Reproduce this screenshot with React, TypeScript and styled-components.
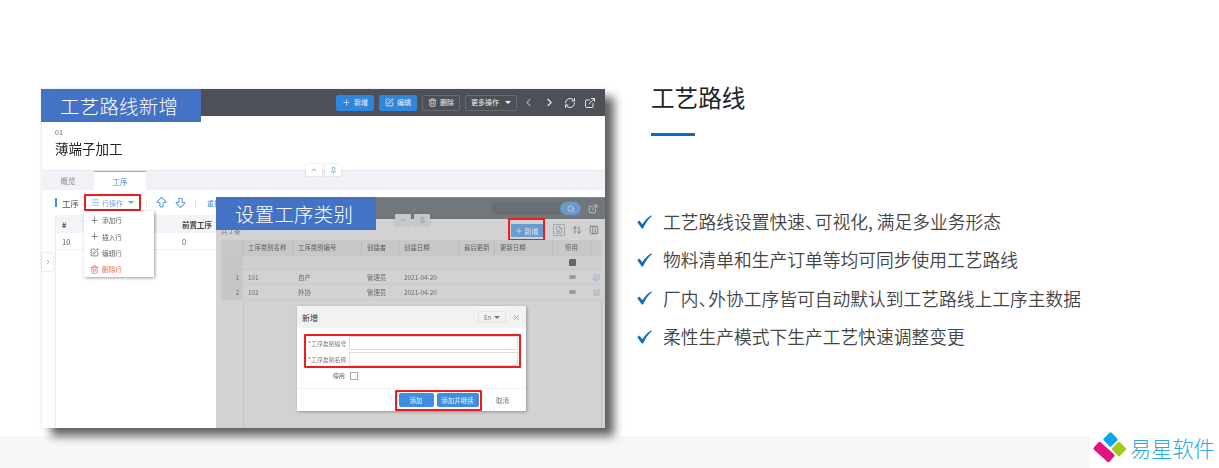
import React from "react";
import styled, { createGlobalStyle } from "styled-components";
import { Plus, SquarePen, Trash2, ChevronLeft, ChevronRight, ChevronUp, ChevronDown, RefreshCw, ExternalLink, Menu, ArrowBigUp, ArrowBigDown, Pin, Search, X, Columns3, ArrowUpDown, FileSymlink } from "lucide-react";

const Global = createGlobalStyle`
  html, body { margin: 0; padding: 0; background: #fff; overflow: hidden; }
  * { box-sizing: border-box; }
  body { font-family: "Noto Sans CJK SC", "Noto Sans", sans-serif; }
`;
const Page = styled.div`width: 1219px; height: 468px; display: flex; flex-direction: column; background: #fff;`;
const Main = styled.div`height: 436px; display: flex; align-items: flex-start;`;
const Band = styled.div`height: 32px; background: #f7f7f7; display: flex; justify-content: flex-end;`;
const Logo = styled.div`width: 129px; margin-top: -1px; height: 33px; background: #fff; display: flex; align-items: flex-start;`;
const LogoText = styled.span`font-size: 21.2px; line-height: 26px; color: #2aa7e2; font-weight: 300; white-space: nowrap;`;
const LogoSvg = styled.svg`overflow: visible; flex: none;`;

const Shot = styled.div`
  position: relative; width: 563px; height: 339px; margin: 89px 0 0 42px; background: #fff;
  box-shadow: 9px 8px 9px rgba(0,0,0,.62), -1px 0 3px rgba(0,0,0,.08);
  display: flex; flex-direction: column; filter: blur(.35px);
`;
const HeaderBar = styled.div`height: 27px; background: #4b5157; display: flex; align-items: center; justify-content: flex-end; gap: 5px; padding-right: 9px; color: #f0f2f4; flex: none;`;
const HeadBtn = styled.div<{ $solid?: boolean; $w: number }>`
  width: ${p => p.$w}px; height: 16px; border-radius: 2px; display: flex; align-items: center; justify-content: center; gap: 3px;
  font-size: 7px; line-height: 1; color: #eef1f4;
  background: ${p => p.$solid ? "#2f86dd" : "transparent"};
  border: 1px solid ${p => p.$solid ? "#2f86dd" : "#666c72"};
`;
const HeadIcons = styled.div`display: flex; align-items: center; gap: 8px; margin-left: 0; color: #e8eaec;`;
const Label = styled.div<{ $l: number; $t: number; $w: number; $h: number }>`
  position: absolute; z-index: 5; left: ${p => p.$l}px; top: ${p => p.$t}px; width: ${p => p.$w}px; height: ${p => p.$h}px;
  background: #4472c4; color: #fff; font-size: 19.4px; line-height: ${p => p.$h}px; padding-left: 19px; letter-spacing: .3px; font-weight: 300; white-space: nowrap;
`;
const Intro = styled.div`height: 54px; padding: 12px 0 0 13px; flex: none; position: relative;`;
const Code = styled.div`font-size: 7px; line-height: 9px; color: #666;`;
const Name = styled.div`font-size: 13.5px; line-height: 20px; color: #222; margin-top: 1px;`;
const Tabs = styled.div`height: 20px; background: #f0f2f7; border-top: 1px solid #e3e7ee; display: flex; flex: none; font-size: 7.5px; align-items: stretch;`;
const Tab = styled.div<{ $on?: boolean }>`
  width: 52px; text-align: center; line-height: 19px; color: ${p => p.$on ? "#3d8be0" : "#888"};
  background: ${p => p.$on ? "#fff" : "transparent"}; border-top: ${p => p.$on ? "1px solid #7db4ee" : "none"};
`;
const MiniGroup = styled.div<{ $l: number; $t: number }>`position: absolute; left: ${p => p.$l}px; top: ${p => p.$t}px; display: flex; gap: 3px; z-index: 2;`;
const MiniBtn = styled.div<{ $w?: number; $dim?: boolean }>`
  width: ${p => p.$w ?? 16}px; height: 12px; background: ${p => p.$dim ? "#c8c8c8" : "#fff"}; border-radius: 1px;
  box-shadow: 0 0 2px rgba(0,0,0,.2); display: flex; align-items: center; justify-content: center; color: ${p => p.$dim ? "#8a8f96" : "#4d95e2"};
`;
const Toolbar = styled.div`height: 25px; display: flex; align-items: center; padding-left: 13px; flex: none; font-size: 8.5px; color: #555;`;
const Accent = styled.div`width: 2px; height: 9px; background: #3d8be0; margin-right: 5px;`;
const RedBox = styled.div`border: 2px solid #ee1c1c; border-radius: 1px;`;
const RowOps = styled(RedBox)`width: 57px; height: 17px; margin-left: 5px; display: flex; align-items: center; gap: 2px; padding-left: 5px; color: #6ea6e6; font-size: 7px;`;
const Caret = styled.span`width: 0; height: 0; border: 3px solid transparent; border-top-color: currentColor; margin: 3px 0 0 3px;`;
const Sep = styled.div`width: 1px; height: 8px; background: #dfe3e8; margin: 0 5px;`;
const BlueIcon = styled.div`display: flex; color: #5c9de4; margin: 0 3px;`;
const BlueText = styled.span`color: #3d8be0; font-size: 7px; margin-left: 6px;`;
const Grid = styled.div`margin-left: 13px; width: 161px; flex: 1; border-left: 1px solid #e8ebf0; font-size: 7.5px; color: #555;`;
const GridHead = styled.div`height: 18px; background: #f2f4f7; display: grid; grid-template-columns: 120px 1fr; align-items: center; font-weight: 700; color: #444;`;
const GridRow = styled.div`height: 17px; border-bottom: 1px solid #eef0f4; display: grid; grid-template-columns: 120px 1fr; align-items: center;`;
const Cell = styled.span`padding-left: 6px; white-space: nowrap;`;
const Side = styled.div`position: absolute; left: 0; top: 164px; width: 11px; height: 18px; background: #fff; box-shadow: 0 0 2px rgba(0,0,0,.25); border-radius: 0 2px 2px 0; display: flex; align-items: center; justify-content: center; color: #5c9de4; z-index: 3;`;
const Dropdown = styled.div`position: absolute; z-index: 4; left: 42px; top: 122px; width: 70px; height: 66px; background: #fff; box-shadow: 1px 1px 3px rgba(0,0,0,.4); padding-top: 1px;`;
const DropItem = styled.div<{ $danger?: boolean }>`height: 16.4px; display: flex; align-items: center; gap: 3px; padding-left: 5px; font-size: 6.7px; color: ${p => p.$danger ? "#f0654c" : "#666"};`;
const DropIcon = styled.span`width: 10px; display: flex; justify-content: center;`;

const Overlay = styled.div`position: absolute; z-index: 3; left: 174px; top: 108px; width: 389px; height: 231px; background: #d2d2d2; display: flex; flex-direction: column;`;
const OverTop = styled.div`height: 22px; background: #72777c; border-top: 1px solid #8a8e92; display: flex; align-items: center; justify-content: flex-end; gap: 8px; padding-right: 7px; color: #c8ccd0; flex: none;`;
const SearchPill = styled.div`width: 21px; height: 13px; border-radius: 7px; background: #6d98ca; display: flex; align-items: center; justify-content: center; color: #ddd;`;
const SearchBox = styled.div`width: 90px; height: 13px; border-radius: 7px; background: #6a6f74; display: flex; justify-content: flex-end; margin-right: -1px;`;
const OverTools = styled.div`height: 21px; display: flex; align-items: center; justify-content: flex-end; gap: 7px; padding-right: 6px; color: #777; flex: none;`;
const AddOuter = styled(RedBox)`width: 37px; height: 23px; display: flex; align-items: center; justify-content: center; margin-right: 1px;`;
const AddBtn = styled.div`width: 32px; height: 13px; background: #6b9ad0; color: #dfe6ee; font-size: 7px; display: flex; align-items: center; justify-content: center; gap: 2px; margin-top: 2px;`;
const ToolIcon = styled.div`width: 12px; height: 12px; border: 1px solid #a5a5a5; border-radius: 1px; display: flex; align-items: center; justify-content: center; color: #6f93bb;`;
const Plain = styled.div`display: flex; color: #777;`;
const Count = styled.div`position: absolute; left: 5px; top: 31px; font-size: 6.5px; line-height: 7px; color: #777;`;
const colTpl = "22px 50px 69px 37px 60px 36px 58px 38px 11px";
const TableBox = styled.div`margin: 0 3px 0 5px; flex: 1; font-size: 6.4px; color: #6a6a6a; display: flex; flex-direction: column;`;
const THead = styled.div`height: 16px; display: grid; grid-template-columns: ${colTpl}; background: #c8c8c8; align-items: stretch; color: #5c5c5c; flex: none;`;
const TFilter = styled.div`height: 14px; display: grid; grid-template-columns: ${colTpl}; border-bottom: 1px solid #c6c6c6; background: #cfcfcf; align-items: center; flex: none;`;
const TRow = styled.div`height: 15px; display: grid; grid-template-columns: ${colTpl}; align-items: center; border-bottom: 1px solid #cacaca; flex: none;`;
const TFill = styled.div`flex: 1; margin-left: 22px; border-left: 1px solid #c2c2c2; border-right: 1px solid #b9c4d2;`;
const Num = styled.span`background: #c6c6c6; height: 100%; display: flex; align-items: center; justify-content: flex-end; padding-right: 4px; font-size: 6px;`;
const HeadCell = styled.span<{ $c?: boolean }>`padding-left: ${p => p.$c ? 0 : 5}px; text-align: ${p => p.$c ? "center" : "left"}; white-space: nowrap; line-height: 16px; border-right: 1px solid #bcbcbc;`;
const TCell = styled.span`padding-left: 5px; white-space: nowrap; display: block;`;
const Blank = styled.span`background: #c6c6c6; height: 100%;`;
const Toggle = styled.span`display: block; width: 7px; height: 4px; background: #999; border-radius: 2px; margin: 0 auto;`;
const FilterMark = styled.span`display: block; width: 7px; height: 7px; background: #666; border-radius: 1px; margin: 0 auto;`;
const RowEdit = styled.span`display: flex; justify-content: center; color: #7ba3d3;`;

const Dialog = styled.div`position: absolute; z-index: 4; left: 81px; top: 109px; width: 229px; height: 105px; background: #fff; box-shadow: 1px 1px 3px rgba(0,0,0,.3); display: flex; flex-direction: column;`;
const DlgHead = styled.div`height: 22px; background: #f2f2f2; display: flex; align-items: center; padding: 0 5px; font-size: 8px; color: #333; flex: none;`;
const DlgTitle = styled.span`flex: 1;`;
const Lang = styled.div`width: 28px; height: 12px; border: 1px solid #e4e4e4; font-size: 6px; color: #777; display: flex; align-items: center; justify-content: center; margin-right: 6px;`;
const FormBox = styled(RedBox)`margin: 6px 5px 0 7px; height: 34px; display: flex; flex-direction: column; justify-content: center; gap: 2px; padding: 0 1px 0 0;`;
const FormRow = styled.div`display: flex; align-items: center; font-size: 5.9px; color: #777;`;
const Star = styled.span`color: #e33; margin-left: 2px; width: 3px;`;
const FormLabel = styled.span`width: 38px; white-space: nowrap;`;
const Input = styled.div`flex: 1; height: 14px; border: 1px solid #ddd; background: #fff;`;
const CheckRow = styled.div`display: flex; align-items: center; justify-content: flex-end; width: 61px; gap: 5px; font-size: 6.2px; color: #666; margin-top: 3px; height: 9px;`;
const CheckBox = styled.div`width: 8px; height: 8px; border: 1px solid #aaa; flex: none;`;
const DlgFoot = styled.div`margin-top: auto; height: 23px; border-top: 1px solid #f2f2f2; display: flex; align-items: center; font-size: 6.5px; padding-left: 98px;`;
const FootBox = styled(RedBox)`width: 87px; height: 21px; display: flex; align-items: center; justify-content: center; gap: 3px;`;
const Primary = styled.div<{ $w: number }>`width: ${p => p.$w}px; height: 14px; background: #3f8de0; border-radius: 2px; color: #e6f0fb; display: flex; align-items: center; justify-content: center; white-space: nowrap;`;
const Cancel = styled.span`color: #777; margin-left: 14px;`;

const Right = styled.div`margin: 87px 0 0 32px; width: 500px;`;
const Title = styled.h1`margin: 0 0 0 14px; font-weight: 400; font-size: 23.6px; line-height: 20px; color: #222;`;
const Rule = styled.div`width: 44px; height: 3px; background: #0f6cbd; margin: 26px 0 0 14px;`;
const List = styled.ul`list-style: none; padding: 0; margin: 72px 0 0; display: flex; flex-direction: column; gap: 12.4px;`;
const Item = styled.li`display: flex; align-items: center; gap: 10px; font-size: 17.76px; line-height: 26px; color: #444; white-space: nowrap; font-weight: 350;`;
const Text = styled.span``;
const Punct = styled.span`letter-spacing: -8px;`;

const Check = () => (
  <svg width="16" height="17" viewBox="1 0 16 17"><path d="M1.3 9.2 L3.3 7.6 L6.4 11.2 C8.6 7.6 11.4 4.4 15.6 2.2 L16 3 C12.3 6 9.6 10 7 15.6 L5.8 15.6 Z" fill="#0f6cbd" /></svg>
);
const LogoMark = () => (
  <LogoSvg width="40" height="33" viewBox="0 0 40 33">
    <rect x="-5.5" y="-5.5" width="11" height="11" rx="1.5" transform="translate(20.5 4.5) rotate(45)" fill="#0ea4ea" />
    <rect x="-5.5" y="-5.5" width="11" height="11" rx="1.5" transform="translate(29 14) rotate(45)" fill="#a4c91a" />
    <rect x="-10.5" y="-5" width="21" height="10" rx="1.5" transform="translate(14 17) rotate(42)" fill="#e2127f" />
  </LogoSvg>
);

const features = [
  <>工艺路线设置快速<Punct>、</Punct>可视化, 满足多业务形态</>,
  <>物料清单和生产订单等均可同步使用工艺路线</>,
  <>厂内<Punct>、</Punct>外协工序皆可自动默认到工艺路线上工序主数据</>,
  <>柔性生产模式下生产工艺快速调整变更</>,
];
const cols = ["工序类别名称", "工序类别编号", "创建者", "创建日期", "最后更新", "更新日期"];
const rows = [["1", "101", "自产"], ["2", "102", "外协"]];

export default function App() {
  return (
    <Page>
      <Global />
      <Main>
        <Shot>
          <Label $l={-1} $t={0} $w={160} $h={33}>工艺路线新增</Label>
          <HeaderBar>
            <HeadBtn $solid $w={38}><Plus size={9} />新增</HeadBtn>
            <HeadBtn $solid $w={38}><SquarePen size={9} />编辑</HeadBtn>
            <HeadBtn $w={38}><Trash2 size={9} />删除</HeadBtn>
            <HeadBtn $w={52}>更多操作 <Caret /></HeadBtn>
            <HeadIcons>
              <ChevronLeft size={13} color="#9aa0a6" /><ChevronRight size={13} /><RefreshCw size={12} /><ExternalLink size={12} />
            </HeadIcons>
          </HeaderBar>
          <Intro>
            <Code>01</Code>
            <Name>薄端子加工</Name>
            <MiniGroup $l={264} $t={48}>
              <MiniBtn><ChevronUp size={8} /></MiniBtn>
              <MiniBtn><Pin size={7} /></MiniBtn>
            </MiniGroup>
          </Intro>
          <Tabs><Tab>概览</Tab><Tab $on>工序</Tab></Tabs>
          <Toolbar>
            <Accent />工序
            <RowOps><Menu size={9} />行操作<Caret /></RowOps>
            <Sep />
            <BlueIcon><ArrowBigUp size={13} /></BlueIcon>
            <BlueIcon><ArrowBigDown size={13} /></BlueIcon>
            <Sep /><BlueText>重排</BlueText>
          </Toolbar>
          <Grid>
            <GridHead><Cell>#</Cell><Cell>前置工序</Cell></GridHead>
            <GridRow><Cell>10</Cell><Cell>0</Cell></GridRow>
          </Grid>
          <Side><ChevronRight size={8} /></Side>
          <Dropdown>
            <DropItem><DropIcon><Plus size={9} /></DropIcon>添加行</DropItem>
            <DropItem><DropIcon><Plus size={9} /></DropIcon>插入行</DropItem>
            <DropItem><DropIcon><SquarePen size={9} /></DropIcon>编辑行</DropItem>
            <DropItem $danger><DropIcon><Trash2 size={9} /></DropIcon>删除行</DropItem>
          </Dropdown>
          <Overlay>
            <Label $l={0} $t={0} $w={160} $h={33}>设置工序类别</Label>
            <OverTop>
              <SearchBox><SearchPill><Search size={8} /></SearchPill></SearchBox>
              <ExternalLink size={10} />
            </OverTop>
            <MiniGroup $l={179} $t={17}>
              <MiniBtn $dim><ChevronDown size={8} /></MiniBtn>
              <MiniBtn $dim><Pin size={7} /></MiniBtn>
            </MiniGroup>
            <OverTools>
              <AddOuter><AddBtn><Plus size={8} />新增</AddBtn></AddOuter>
              <ToolIcon><FileSymlink size={8} /></ToolIcon>
              <Plain><ArrowUpDown size={10} /></Plain>
              <Plain><Columns3 size={10} /></Plain>
            </OverTools>
            <Count>共 2 条</Count>
            <TableBox>
              <THead>
                <HeadCell />
                {cols.map(c => <HeadCell key={c}>{c}</HeadCell>)}
                <HeadCell $c>停用</HeadCell><span />
              </THead>
              <TFilter>
                <Blank />
                {cols.map(c => <span key={c} />)}
                <FilterMark /><span />
              </TFilter>
              {rows.map(r => (
                <TRow key={r[0]}>
                  <Num>{r[0]}</Num><TCell>{r[1]}</TCell><TCell>{r[2]}</TCell>
                  <TCell>管理员</TCell><TCell>2021-04-20</TCell><span /><span />
                  <Toggle /><RowEdit><SquarePen size={7} /></RowEdit>
                </TRow>
              ))}
              <TFill />
            </TableBox>
            <Dialog>
              <DlgHead>
                <DlgTitle>新增</DlgTitle>
                <Lang>En <Caret /></Lang>
                <X size={9} color="#999" />
              </DlgHead>
              <FormBox>
                <FormRow><Star>*</Star><FormLabel>工序类别编号</FormLabel><Input /></FormRow>
                <FormRow><Star>*</Star><FormLabel>工序类别名称</FormLabel><Input /></FormRow>
              </FormBox>
              <CheckRow>停用<CheckBox /></CheckRow>
              <DlgFoot>
                <FootBox><Primary $w={35}>添加</Primary><Primary $w={42}>添加并继续</Primary></FootBox>
                <Cancel>取消</Cancel>
              </DlgFoot>
            </Dialog>
          </Overlay>
        </Shot>
        <Right>
          <Title>工艺路线</Title>
          <Rule />
          <List>
            {features.map((f, i) => <Item key={i}><Check /><Text>{f}</Text></Item>)}
          </List>
        </Right>
      </Main>
      <Band>
        <Logo><LogoMark /><LogoText>易星软件</LogoText></Logo>
      </Band>
    </Page>
  );
}
